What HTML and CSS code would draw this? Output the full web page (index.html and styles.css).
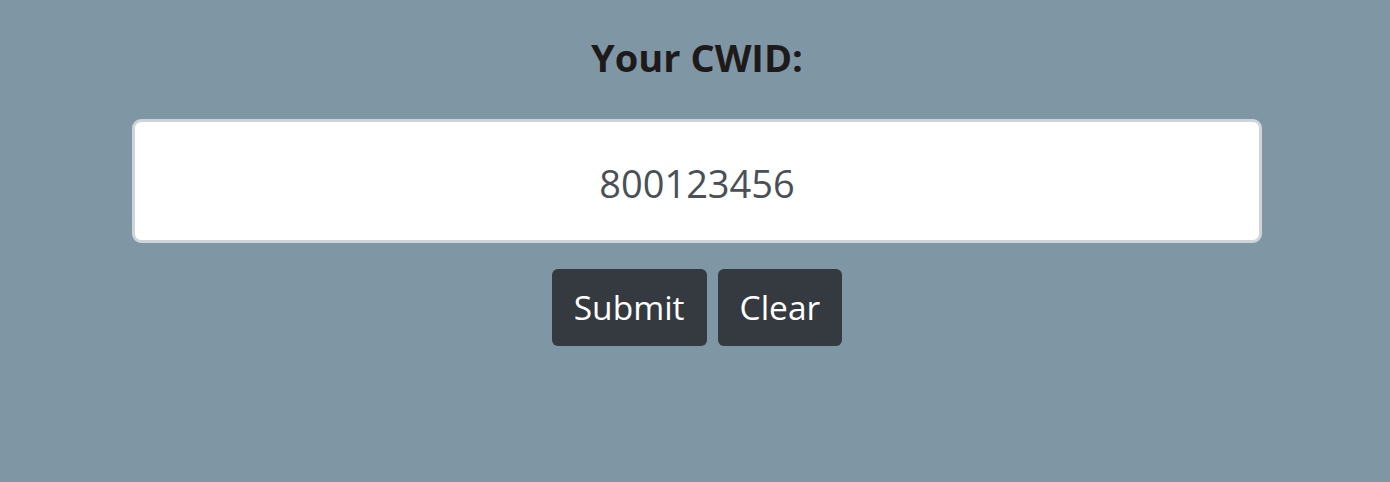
FILE: index.html
```html
<!DOCTYPE html>
<html>
<head>
<meta charset="utf-8">
<link rel="stylesheet" href="styles.css">
</head>
<body>
<main class="page">
  <h2 class="title">Your CWID:</h2>
  <input class="cwid" type="text" value="800123456">
  <div class="actions">
    <button class="btn">Submit</button>
    <button class="btn">Clear</button>
  </div>
</main>
</body>
</html>
```
FILE: styles.css
```css
html, body {
  margin: 0;
  padding: 0;
  background: #7f96a5;
  height: 100%;
}
.page {
  display: flex;
  flex-direction: column;
  align-items: center;
  padding-top: 35px;
  padding-left: 4px;
  font-family: "Open Sans", "Noto Sans", sans-serif;
}
.title {
  margin: 0;
  font-size: 38px;
  font-weight: 700;
  color: #1e1a1a;
  line-height: 1.2;
}
.cwid {
  box-sizing: border-box;
  margin-top: 38px;
  width: 1130px;
  height: 124px;
  border: 3px solid #ced4da;
  border-radius: 9px;
  background: #fff;
  text-align: center;
  font-family: "Open Sans", "Noto Sans", sans-serif;
  font-size: 38px;
  color: #495057;
  padding: 4px 12px 0;
  outline: none;
}
.actions {
  display: flex;
  gap: 11px;
  margin-top: 26px;
}
.btn {
  background: #343a40;
  color: #fff;
  border: none;
  border-radius: 6px;
  height: 77px;
  padding: 0 22px;
  font-family: "Open Sans", "Noto Sans", sans-serif;
  font-size: 33.5px;
}
```
